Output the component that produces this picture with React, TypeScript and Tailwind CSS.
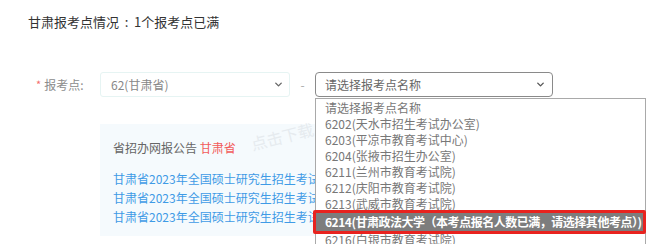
import React from "react";
import { ChevronDown } from "lucide-react";

const options = [
    "请选择报考点名称",
    "6202(天水市招生考试办公室)",
    "6203(平凉市教育考试中心)",
    "6204(张掖市招生办公室)",
    "6211(兰州市教育考试院)",
    "6212(庆阳市教育考试院)",
    "6213(武威市教育考试院)",
    "6214(甘肃政法大学（本考点报名人数已满，请选择其他考点）)",
    "6216(白银市教育考试院)",
];

const notices = [
    "甘肃省2023年全国硕士研究生招生考试报名公告",
    "甘肃省2023年全国硕士研究生招生考试报考须知",
    "甘肃省2023年全国硕士研究生招生考试缴费说明",
];

export default function App() {
    return (
        <div
            className="relative w-[647px] h-[244px] overflow-hidden bg-white"
            style={{ fontFamily: '"Noto Sans CJK SC", "Liberation Sans", sans-serif' }}
        >
            <div className="pt-[13px] pl-[28px] text-[13px] leading-[18px] text-[#333] flex">
                <span>甘肃报考点情况</span>
                <span className="inline-block w-[15px] text-center">:</span>
                <span>1个报考点已满</span>
            </div>

            {/* select row */}
            <div className="flex items-center mt-[41px] h-[25px]">
                <div className="w-[100px] pl-[36px] flex items-center text-[12px] text-[#8c8c8c]">
                    <span className="text-[#f56c6c] mr-[3px] text-[11px]">*</span>
                    <span>报考点:</span>
                </div>
                <div className="w-[190px] h-[25px] flex items-center justify-between border border-[#e6f4f3] rounded-[3px] pl-[10px] pr-[5px] text-[12px] text-[#888]">
                    <span>62(甘肃省)</span>
                    <ChevronDown size={11} strokeWidth={3} className="text-[#666]" />
                </div>
                <div className="w-[25px] text-center text-[12px] text-[#aaa]">-</div>
                <div className="relative w-[238px] h-[25px]">
                    <div className="w-full h-full flex items-center justify-between border border-[#8a8a8a] rounded-[4px] pl-[9px] pr-[6px] text-[12px] text-[#666]">
                        <span>请选择报考点名称</span>
                        <ChevronDown size={11} strokeWidth={3} className="text-[#555]" />
                    </div>
                    {/* native select open list */}
                    <div className="absolute left-0 top-[26px] w-[331px] h-[200px] border border-[#a9a9a9] bg-white pt-[1px] z-10">
                        {options.map((o, i) =>
                            i === 7 ? (
                                <div
                                    key={o}
                                    className="relative h-[18px] leading-[18px] my-[1px] pl-[9px] bg-[#7d7d7d] text-white text-[12px] font-bold whitespace-nowrap tracking-[-0.04em]"
                                >
                                    {o}
                                    <div className="absolute -left-[3px] -right-[1px] -top-[3px] -bottom-[3px] border-[3px] border-[#e8231f] rounded-[2px]" />
                                </div>
                            ) : (
                                <div key={o} className="h-[16px] leading-[16px] pl-[9px] text-[12px] text-[#777] whitespace-nowrap overflow-visible">
                                    {o}
                                </div>
                            )
                        )}
                    </div>
                </div>
            </div>

            {/* notice panel */}
            <div className="relative ml-[100px] mt-[27px] w-[260px] h-[112px] bg-[#f5fafd] pl-[13px] pt-[15px]">
                <div className="text-[12px] leading-[17px] text-[#666]">
                    省招办网报公告 <span className="text-[#f25b5b]">甘肃省</span>
                </div>
                <div className="absolute left-[150px] top-[0px] -rotate-[14deg] text-[16px] text-[#e6ebef] whitespace-nowrap">
                    点击下载
                </div>
                <div className="mt-[14px] flex flex-col gap-[1px]">
                    {notices.map((n) => (
                        <div key={n} className="text-[12px] leading-[18px] text-[#3f9be6] whitespace-nowrap">
                            {n}
                        </div>
                    ))}
                </div>
            </div>
        </div>
    );
}
